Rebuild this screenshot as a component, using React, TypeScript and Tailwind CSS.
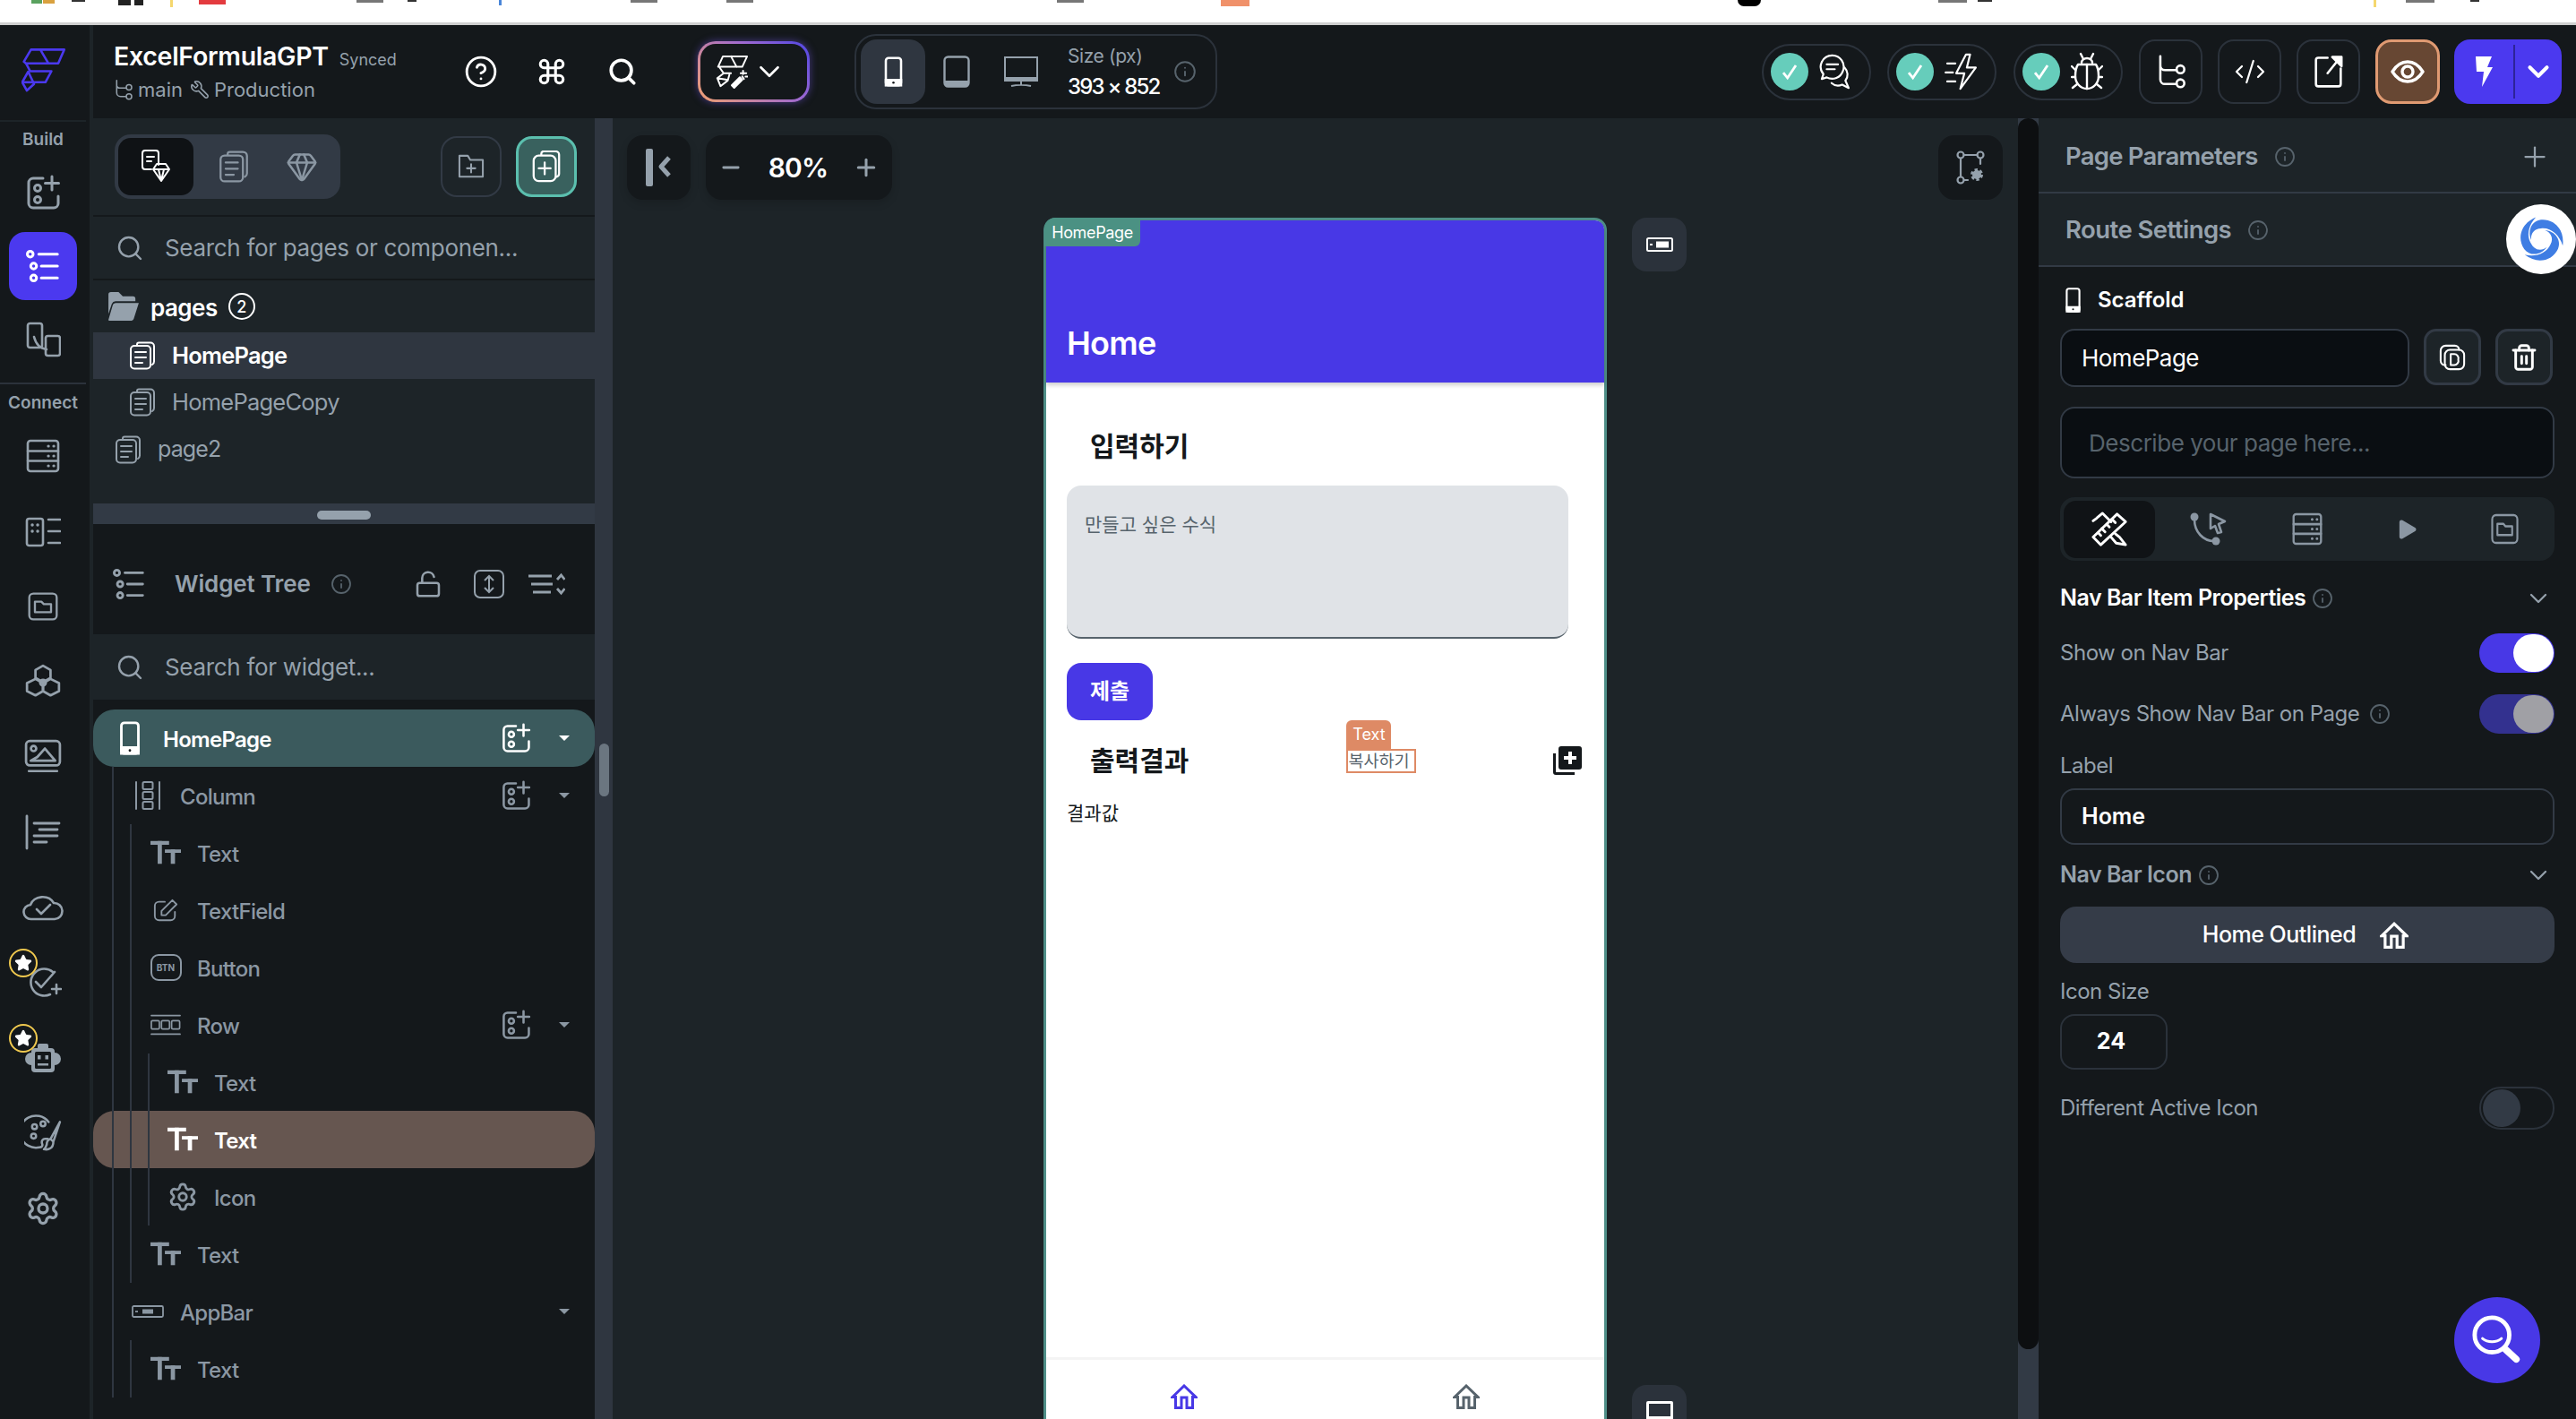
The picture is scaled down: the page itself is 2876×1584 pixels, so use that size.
import type { ReactNode } from "react";
import {
  ChevronDown,
  CircleHelp,
  CodeXml,
  Command,
  Gem,
  Info,
  LockOpen,
  Minus,
  Play,
  Plus,
  Search,
  Settings,
  Star,
  Trash2,
  Wrench,
} from "lucide-react";

type IconProps = { className?: string };

function Svg({ className, box = "0 0 40 40", sw = 2.6, children }: IconProps & { box?: string; sw?: number; children: ReactNode }) {
  return (
    <svg viewBox={box} fill="none" stroke="currentColor" strokeWidth={sw} strokeLinecap="round" strokeLinejoin="round" className={className}>
      {children}
    </svg>
  );
}

function Logo({ className }: IconProps) {
  return (
    <svg viewBox="0 0 50 50" fill="none" stroke="currentColor" strokeWidth="2.6" strokeLinejoin="round" className={className}>
      <path d="M2.600 14.800 10.600 1.400h37.100L41 16.700H5zM21 1.400l9 15.300" />
      <path d="M5 16.700 9.700 25.500h23.700L26.700 37.800H12" />
      <path d="M.8 37.800 7.500 26 14 39.700 6 47z" />
      <path d="M.8 37.800H14" />
    </svg>
  );
}

function WidgetAdd({ className }: IconProps) {
  return (
    <Svg className={className} sw={3}>
      <path d="M20 4H9a5 5 0 0 0-5 5v23a5 5 0 0 0 5 5h23a5 5 0 0 0 5-5V24" />
      <circle cx="14" cy="15" r="3.5" />
      <circle cx="14" cy="28" r="3.5" />
      <path d="M30 2v15M22.5 9.500h15" />
    </Svg>
  );
}

function ListDots({ className }: IconProps) {
  return (
    <Svg className={className} sw={3.2}>
      <circle cx="5" cy="6" r="3.400" />
      <circle cx="9" cy="20" r="3.400" />
      <circle cx="9" cy="34" r="3.400" />
      <path d="M15 6h22M18 20h19M18 34h19" />
    </Svg>
  );
}

function Connect({ className }: IconProps) {
  return (
    <Svg className={className}>
      <rect x="3" y="2" width="16" height="27" rx="2.500" />
      <rect x="23" y="16" width="16" height="22" rx="2.500" />
      <path d="M10 17c2 8 7 13 14 14" />
    </Svg>
  );
}

function Database({ className }: IconProps) {
  return (
    <svg viewBox="0 0 40 40" preserveAspectRatio="none" fill="none" stroke="currentColor" strokeWidth="2.600" strokeLinecap="round" className={className}>
      <rect x="3" y="3" width="34" height="34" rx="3" />
      <path d="M3 14.500h34M3 25.500h34" />
      <path d="M26 9h.1M32 9h.1M26 20h.1M32 20h.1M26 31h.1M32 31h.1" strokeWidth="3.200" />
    </svg>
  );
}

function GridList({ className }: IconProps) {
  return (
    <Svg className={className}>
      <rect x="2" y="6" width="18" height="30" rx="2.500" />
      <path d="M8 13h.1M14 13h.1M8 20h.1M14 20h.1" strokeWidth="3.400" />
      <path d="M26 7h13M26 20h13M26 33h13" />
    </Svg>
  );
}

function FolderBox({ className }: IconProps) {
  return (
    <svg viewBox="0 0 40 40" preserveAspectRatio="none" fill="none" stroke="currentColor" strokeWidth="2.600" strokeLinejoin="round" className={className}>
      <rect x="3" y="4" width="34" height="32" rx="5" />
      <path d="M10 14h8l3 3h9v10H10z" />
    </svg>
  );
}

function Hexes({ className }: IconProps) {
  return (
    <Svg className={className}>
      <path d="M20 3l8 4.500v8.500l-8 4.500-8-4.500V7.500z" />
      <path d="M12 17l8 4.500v8.500l-8 4.500-9-4.500V21.500z" />
      <path d="M28 17l9 4.500v8.500l-9 4.500-8-4.500V21.500z" />
      <circle cx="20" cy="21" r="3" />
    </Svg>
  );
}

function ImageLaptop({ className }: IconProps) {
  return (
    <Svg className={className}>
      <rect x="2" y="3" width="36" height="26" rx="4" />
      <circle cx="10" cy="11" r="2.800" />
      <path d="M7 24l7-4 8-9 11 13zM5 35h30" />
    </Svg>
  );
}

function AlignLines({ className }: IconProps) {
  return (
    <Svg className={className} sw={2.800}>
      <path d="M2 2v36" />
      <path d="M10 10h28M16 17h20M10 24h26M10 31h14" />
    </Svg>
  );
}

function CloudOk({ className }: IconProps) {
  return (
    <Svg className={className} box="0 0 46 32">
      <path d="M13 29H10a8 8 0 0 1-1-16A14 12 0 0 1 35 11a9 9 0 0 1 1 18z" />
      <path d="M16 18l5 5 10-10" />
    </Svg>
  );
}

function CheckAdd({ className }: IconProps) {
  return (
    <Svg className={className}>
      <path d="M31 8A15 15 0 1 0 28 33" />
      <path d="M12 19l6 6 15-17M30 27h10M35 22v10" />
    </Svg>
  );
}

function RobotHead({ className }: IconProps) {
  return (
    <svg viewBox="0 0 40 36" className={className} fill="currentColor">
      <path d="M14 4a2 2 0 0 1 2-2h8a2 2 0 0 1 2 2v3h3a4 4 0 0 1 4 4v1a7 7 0 0 1 0 14v4a4 4 0 0 1-4 4H11a4 4 0 0 1-4-4v-4a7 7 0 0 1 0-14v-1a4 4 0 0 1 4-4h3z" />
      <rect x="11" y="11" width="18" height="19" rx="1.500" fill="#14181b" />
      <rect x="14" y="15" width="3.500" height="4.500" />
      <rect x="22.500" y="15" width="3.500" height="4.500" />
      <rect x="14" y="24" width="12" height="2.500" />
    </svg>
  );
}

function PaletteBrush({ className }: IconProps) {
  return (
    <Svg className={className} sw={2.400}>
      <path d="M26 8A17 17 0 1 0 16 35c3 0 4-2 3-4-1-3 1-5 3-5h3" />
      <circle cx="10" cy="23" r="2.600" />
      <circle cx="11" cy="13" r="2.600" />
      <circle cx="20" cy="10" r="2.600" />
      <path d="M38 8 28 26l3 3 7-21zM28 26c-3 1-4 4-4 6-1 2-1 4-3 5 5 1 10-1 10-8" />
    </Svg>
  );
}

function BranchIcon({ className }: IconProps) {
  return (
    <Svg className={className} box="0 0 24 28" sw={1.800}>
      <path d="M3 2v16a5 5 0 0 0 5 5h7M3 9a4 4 0 0 0 4 3h8" />
      <circle cx="19" cy="11" r="3.500" />
      <circle cx="19" cy="23" r="3.500" />
    </Svg>
  );
}

function PageIcon({ className }: IconProps) {
  return (
    <Svg className={className} box="0 0 30 32" sw={2}>
      <path d="M9 4.500V3.500A2 2 0 0 1 11 1.500h13a4 4 0 0 1 4 4v17a4 4 0 0 1-2 3.500" />
      <rect x="2" y="5" width="22" height="25.500" rx="4" />
      <path d="M7 12h12M7 18h12M7 24h8" />
    </Svg>
  );
}

function PageGem({ className }: IconProps) {
  return (
    <Svg className={className} box="0 0 34 40" sw={2}>
      <path d="M20 18V5a3 3 0 0 0-3-3H5a3 3 0 0 0-3 3v15a3 3 0 0 0 3 3h7" />
      <path d="M7 9h8M7 14h5" />
      <path d="M18 17h10l4 6-9 13-9-13zM14 23h18M20 23l3 13 3-13" />
    </Svg>
  );
}

function FolderAdd({ className }: IconProps) {
  return (
    <Svg className={className} box="0 0 32 30" sw={2.200}>
      <path d="M2 2h10l3 5h15v20H2z" />
      <path d="M16 12v10M11 17h10" />
    </Svg>
  );
}

function PageAdd({ className }: IconProps) {
  return (
    <Svg className={className} box="0 0 34 38" sw={2.400}>
      <path d="M11 5V4a3 3 0 0 1 3-3h14a4 4 0 0 1 4 4v22a4 4 0 0 1-3 4" />
      <rect x="2" y="6" width="26" height="30" rx="6" />
      <path d="M15 14v14M8 21h14" />
    </Svg>
  );
}

function FolderOpenSolid({ className }: IconProps) {
  return (
    <svg viewBox="0 0 36 34" className={className} fill="currentColor">
      <path d="M0 3a3 3 0 0 1 3-3h9l5 5h12a3 3 0 0 1 3 3v3H9a5 5 0 0 0-5 3L0 26z" />
      <path d="M9 13h27l-6 19a3 3 0 0 1-3 2H1a1 1 0 0 1-1-1l5-17a4 4 0 0 1 4-3z" />
    </svg>
  );
}

function PhoneSolid({ className }: IconProps) {
  return (
    <svg viewBox="0 0 24 40" className={className} fill="none" stroke="currentColor" strokeWidth="3">
      <rect x="2" y="2" width="20" height="36" rx="3.500" />
      <rect x="2" y="31" width="20" height="7" fill="currentColor" />
      <circle cx="12" cy="34.500" r="1.500" fill="#14181b" stroke="none" />
    </svg>
  );
}

function TabletChin({ className }: IconProps) {
  return (
    <svg viewBox="0 0 30 36" className={className} fill="none" stroke="currentColor" strokeWidth="2.400">
      <rect x="1.500" y="1.500" width="27" height="33" rx="4" />
      <path d="M1.500 28h27v3a4 4 0 0 1-4 4h-19a4 4 0 0 1-4-4z" fill="currentColor" stroke="none" />
    </svg>
  );
}

function DesktopChin({ className }: IconProps) {
  return (
    <svg viewBox="0 0 38 34" className={className} fill="none" stroke="currentColor" strokeWidth="2">
      <rect x="1" y="1" width="36" height="26" />
      <rect x="1" y="23" width="36" height="5" fill="currentColor" stroke="none" />
      <path d="M19 28v4M8 33c6-1.500 16-1.500 22 0" />
    </svg>
  );
}

function TextIcon({ className }: IconProps) {
  return (
    <svg viewBox="0 0 36 28" className={className} fill="currentColor">
      <rect x="0" y="0" width="22" height="4.500" />
      <rect x="8.500" y="0" width="5" height="27" />
      <rect x="17" y="10" width="19" height="4" />
      <rect x="24" y="10" width="5" height="17" />
    </svg>
  );
}

function FieldIcon({ className }: IconProps) {
  return (
    <Svg className={className} box="0 0 30 28" sw={2}>
      <path d="M14 4H7a5 5 0 0 0-5 5v12a5 5 0 0 0 5 5h14a5 5 0 0 0 5-5v-5" />
      <path d="M10 15v5h5L28 7l-5-5z" />
    </Svg>
  );
}

function RowIcon({ className }: IconProps) {
  return (
    <Svg className={className} box="0 0 36 26" sw={1.800}>
      <path d="M1 2h34M1 24h34" />
      <rect x="1" y="8" width="9.500" height="10" rx="1.500" />
      <rect x="13" y="8" width="9.500" height="10" rx="1.500" />
      <rect x="25" y="8" width="9.500" height="10" rx="1.500" />
    </Svg>
  );
}

function ColumnIcon({ className }: IconProps) {
  return (
    <Svg className={className} box="0 0 30 34" sw={2}>
      <path d="M2 2v30M28 2v30" />
      <rect x="9.500" y="2" width="11" height="8" rx="1.500" />
      <rect x="9.500" y="13" width="11" height="8" rx="1.500" />
      <rect x="9.500" y="24" width="11" height="8" rx="1.500" />
    </Svg>
  );
}

function AppBarIcon({ className }: IconProps) {
  return (
    <svg viewBox="0 0 36 14" className={className} fill="none" stroke="currentColor" strokeWidth="1.800">
      <rect x="1" y="1" width="34" height="12" rx="1.500" />
      <rect x="12" y="4.500" width="12" height="5" fill="currentColor" stroke="none" />
      <path d="M4 7h3" />
    </svg>
  );
}

function GitIcon({ className }: IconProps) {
  return (
    <Svg className={className} box="0 0 36 44" sw={3}>
      <path d="M4 2v30a6 6 0 0 0 6 6h15M4 14a6 6 0 0 0 6 6h15" />
      <circle cx="30" cy="19" r="5" />
      <circle cx="30" cy="37" r="5" />
    </Svg>
  );
}

function Launch({ className }: IconProps) {
  return (
    <Svg className={className} box="0 0 38 44" sw={3}>
      <path d="M18 4H6a3 3 0 0 0-3 3v31a3 3 0 0 0 3 3h26a3 3 0 0 0 3-3V18" />
      <path d="M18 24 34 4" />
      <path d="M24 3h12v12z" fill="currentColor" />
    </Svg>
  );
}

function EyeRing({ className }: IconProps) {
  return (
    <Svg className={className} box="0 0 38 26" sw={3.400}>
      <path d="M2 13C7 5 12 2 19 2s12 3 17 11c-5 8-10 11-17 11S7 21 2 13z" />
      <circle cx="19" cy="13" r="6" />
    </Svg>
  );
}

function ChatPair({ className }: IconProps) {
  return (
    <Svg className={className} box="0 0 38 44" sw={2.400}>
      <path d="M16 2a14 14 0 0 1 13 19 14 14 0 0 1-20 8l-6 2 2-6A14 14 0 0 1 16 2z" />
      <path d="M9 13h14M9 19h10" />
      <path d="M31 17a12 12 0 0 1 1 16l4 9-8-4a12 12 0 0 1-13-2" />
    </Svg>
  );
}

function SpeedBolt({ className }: IconProps) {
  return (
    <Svg className={className} box="0 0 40 46" sw={2.400}>
      <path d="M26 2 14 25h10l-5 19 19-26H27l4-16z" />
      <path d="M3 13h10M1 24h9M3 35h10" />
    </Svg>
  );
}

function Beetle({ className }: IconProps) {
  return (
    <Svg className={className} box="0 0 36 44" sw={2.400}>
      <path d="M12 12c0-3 3-5 6-5s6 2 6 5" />
      <path d="M8 14h20c2 3 3 8 3 13 0 8-6 14-13 14S5 35 5 27c0-5 1-10 3-13z" />
      <path d="M18 14v27M11 2l3 6M25 2l-3 6M5 20 1 16M31 20l4-4M5 28H1M31 28h4M7 36l-5 4M29 36l5 4" />
    </Svg>
  );
}

function BoltSolid({ className }: IconProps) {
  return (
    <svg viewBox="0 0 20 34" className={className} fill="currentColor">
      <path d="M1 0h18l-5 12h6L8 34l2-17H2z" />
    </svg>
  );
}

function AiLogo({ className }: IconProps) {
  return (
    <Svg className={className} box="0 0 40 42" sw={2.200}>
      <path d="M3 15 9 2h30l-6 13H3zM19 2l7 13M5 16l5 7h9M10 23l-8 6 4 10 9-7 2-7M2 29l12 2" />
      <path d="M20 38l10-10 3 3-10 10z" fill="currentColor" />
      <path d="M34 20v4M31 23h7M37 27h3M33 27l2 3" />
    </Svg>
  );
}

function FlowGear({ className }: IconProps) {
  return (
    <Svg className={className} box="0 0 32 38" sw={2.200}>
      <circle cx="5" cy="5" r="3.500" />
      <circle cx="27" cy="5" r="3.500" />
      <circle cx="5" cy="33" r="3.500" />
      <path d="M8.500 5h15M5 9v20M27 9v6M9 33h4" />
      <circle cx="23" cy="27" r="5" fill="currentColor" strokeWidth="4" strokeDasharray="3 2.200" strokeLinecap="butt" />
    </Svg>
  );
}

function CollapseRail({ className }: IconProps) {
  return (
    <svg viewBox="0 0 30 42" className={className} fill="none">
      <rect x="0" y="0" width="8" height="42" rx="2" fill="currentColor" />
      <path d="M26 10 17 20l9 10" stroke="currentColor" strokeWidth="5" strokeLinejoin="round" />
    </svg>
  );
}

function MiniBar({ className }: IconProps) {
  return (
    <svg viewBox="0 0 30 16" className={className} fill="none" stroke="currentColor" strokeWidth="2">
      <rect x="1" y="1" width="28" height="14" rx="1.500" />
      <rect x="11" y="4.500" width="14" height="7" fill="currentColor" stroke="none" />
      <path d="M4 8h3" />
    </svg>
  );
}

function DupIcon({ className }: IconProps) {
  return (
    <Svg className={className} box="0 0 32 32" sw={2.200}>
      <path d="M8 25A5 5 0 0 1 2 20V8a6 6 0 0 1 6-6h11a5 5 0 0 1 5 5" />
      <rect x="7" y="7" width="23" height="23" rx="6" />
      <path d="M14 12v13h4a5 5 0 0 0 5-6.500 5 5 0 0 0-5-6.500z" />
    </Svg>
  );
}

function RulerPen({ className }: IconProps) {
  return (
    <Svg className={className} box="0 0 42 40" sw={3}>
      <path d="M30 2l10 9-29 27-9-9z" />
      <path d="M24 8l4 4M18 14l3 3M12 19l4 4M8 24l3 3" />
      <path d="M7 6l6-5 10 10M2 10l4-3M28 25l5 4 7 9-11-2-6-7" />
    </Svg>
  );
}

function ActionFlow({ className }: IconProps) {
  return (
    <svg viewBox="0 0 42 38" className={className} fill="none" stroke="currentColor" strokeWidth="2.600">
      <circle cx="6" cy="6" r="4.500" fill="currentColor" stroke="none" />
      <circle cx="30" cy="33" r="4.500" fill="currentColor" stroke="none" />
      <path d="M6 9c0 14 10 24 22 24" />
      <path d="M24 3l16 8-7 3 3 9-4 1-3-8-5 3z" strokeLinejoin="round" />
    </svg>
  );
}

function HouseOutline({ className }: IconProps) {
  return (
    <svg viewBox="0 0 30 28" className={className} fill="none" stroke="currentColor" strokeWidth="3" strokeLinejoin="miter">
      <path d="M2 14.500 15 2l13 12.500h-3.500V26.500H18V15h-6v11.500H5.500V14.500z" />
    </svg>
  );
}

function AddToPhotos({ className }: IconProps) {
  return (
    <svg viewBox="0 0 32 32" className={className} fill="currentColor">
      <path d="M3 8H0v21a3 3 0 0 0 3 3h21v-3H3z" />
      <path d="M29 0H9a3 3 0 0 0-3 3v20a3 3 0 0 0 3 3h20a3 3 0 0 0 3-3V3a3 3 0 0 0-3-3zm-3 15h-5v5h-4v-5h-5v-4h5V6h4v5h5z" />
    </svg>
  );
}

function Magnifier({ className }: IconProps) {
  return (
    <svg viewBox="0 0 60 60" className={className} fill="none" stroke="currentColor" strokeWidth="5" strokeLinecap="round">
      <circle cx="24" cy="24" r="20" />
      <path d="M13 28c6 5 16 5 22 0" strokeWidth="3" />
      <path d="M40 41 52 52" strokeWidth="8" />
    </svg>
  );
}

function Swirl({ className }: IconProps) {
  const arm = "M24 6C36 5 46 15 44 30 41 20 33 13 24 14 17 14 14 20 15 25 11 17 15 7 24 6z";
  return (
    <svg viewBox="0 0 48 48" className={className} fill="#3f7de3">
      {[0, 120, 240].map((deg) => (
        <path key={deg} d={arm} transform={`rotate(${deg} 24 24)`} />
      ))}
    </svg>
  );
}

const topBits = [
  "ml-[35px] w-[12px] h-[4px] bg-[#5aa25f]",
  "ml-[1px] w-[13px] h-[4px] bg-[#d9a13f]",
  "ml-[19px] w-[15px] h-[2px] bg-[#333]",
  "ml-[37px] w-[14px] h-[6px] bg-[#222]",
  "ml-[4px] w-[10px] h-[6px] bg-[#222]",
  "ml-[30px] w-[3px] h-[8px] bg-[#f5d76e]",
  "ml-[29px] w-[30px] h-[5px] bg-[#e33b3f]",
  "ml-[146px] w-[30px] h-[3px] bg-[#777]",
  "ml-[27px] w-[10px] h-[2px] bg-[#333]",
  "ml-[92px] w-[3px] h-[6px] bg-[#4a86d8]",
  "ml-[144px] w-[30px] h-[3px] bg-[#777]",
  "ml-[77px] w-[30px] h-[3px] bg-[#777]",
  "ml-[339px] w-[30px] h-[3px] bg-[#777]",
  "ml-[153px] w-[32px] h-[7px] bg-[#f0916a]",
  "ml-[545px] w-[26px] h-[7px] rounded-b-full bg-black",
  "ml-[198px] w-[32px] h-[3px] bg-[#777]",
  "ml-[12px] w-[16px] h-[2px] bg-[#333]",
  "ml-[426px] w-[3px] h-[8px] bg-[#f5d76e]",
  "ml-[33px] w-[32px] h-[3px] bg-[#777]",
  "ml-[40px] w-[10px] h-[2px] bg-[#333]",
];

const railTop = [
  { icon: WidgetAdd },
  { icon: ListDots, active: true },
  { icon: Connect },
];

const railBottom = [
  { icon: Database, size: "w-[40px] h-[40px]" },
  { icon: GridList, size: "w-[40px] h-[40px]" },
  { icon: FolderBox, size: "w-[36px] h-[36px]" },
  { icon: Hexes, size: "w-[42px] h-[42px]" },
  { icon: ImageLaptop, size: "w-[42px] h-[42px]" },
  { icon: AlignLines, size: "w-[40px] h-[40px]" },
  { icon: CloudOk, size: "w-[46px] h-[32px]" },
  { icon: CheckAdd, size: "w-[42px] h-[40px]", star: true },
  { icon: RobotHead, size: "w-[40px] h-[36px]", star: true },
  { icon: PaletteBrush, size: "w-[42px] h-[42px]" },
  { icon: Settings, size: "w-[40px] h-[40px]" },
];

const treeRows = [
  { label: "HomePage", icon: PhoneSolid, size: "w-[24px] h-[38px]", level: "pl-[21px]", gap: "ml-[17px]", tone: "home", add: true, caret: true },
  { label: "Column", icon: ColumnIcon, size: "w-[30px] h-[34px]", level: "pl-[41px]", gap: "ml-[16px]", add: true, caret: true },
  { label: "Text", icon: TextIcon, size: "w-[34px] h-[28px]", level: "pl-[61px]", gap: "ml-[15px]" },
  { label: "TextField", icon: FieldIcon, size: "w-[28px] h-[28px]", level: "pl-[61px]", gap: "ml-[15px]" },
  { label: "Button", icon: null, size: "", level: "pl-[61px]", gap: "ml-[15px]" },
  { label: "Row", icon: RowIcon, size: "w-[34px] h-[26px]", level: "pl-[61px]", gap: "ml-[15px]", add: true, caret: true },
  { label: "Text", icon: TextIcon, size: "w-[34px] h-[28px]", level: "pl-[80px]", gap: "ml-[15px]" },
  { label: "Text", icon: TextIcon, size: "w-[34px] h-[28px]", level: "pl-[80px]", gap: "ml-[15px]", tone: "picked" },
  { label: "Icon", icon: Settings, size: "w-[34px] h-[34px]", level: "pl-[80px]", gap: "ml-[15px]" },
  { label: "Text", icon: TextIcon, size: "w-[34px] h-[28px]", level: "pl-[61px]", gap: "ml-[15px]" },
  { label: "AppBar", icon: AppBarIcon, size: "w-[36px] h-[14px]", level: "pl-[41px]", gap: "ml-[16px]", caret: true },
  { label: "Text", icon: TextIcon, size: "w-[34px] h-[28px]", level: "pl-[61px]", gap: "ml-[15px]" },
];

function Rail() {
  return (
    <aside className="flex w-[104px] shrink-0 flex-col border-r-[4px] border-[#1d2428] bg-[#14181b] pr-[4px]">
      <div className="mt-[2px] h-[2px] bg-[#1d2428]" />
      <p className="mt-[8px] h-[24px] text-center text-[19px] leading-[24px] font-semibold text-[#95a1ac]">Build</p>
      <div className="mt-[9px] flex flex-col items-center gap-[6px]">
        {railTop.map(({ icon: Icon, active }, i) => (
          <div
            key={i}
            className={active ? "flex h-[76px] w-[76px] items-center justify-center rounded-[18px] bg-[#4b39ef] text-white" : "flex h-[76px] w-[76px] items-center justify-center text-[#95a1ac]"}
          >
            <Icon className={active ? "h-[38px] w-[38px]" : "h-[40px] w-[40px]"} />
          </div>
        ))}
      </div>
      <div className="mt-[10px] h-[2px] w-[96px] bg-[#2b323b]" />
      <p className="mt-[9px] h-[24px] text-center text-[19px] leading-[24px] font-semibold text-[#95a1ac]">Connect</p>
      <div className="mt-[9px] flex flex-col items-center gap-[8px]">
        {railBottom.map(({ icon: Icon, size, star }, i) => (
          <div key={i} className="relative flex h-[76px] w-[76px] items-center justify-center text-[#95a1ac]">
            <Icon className={size} />
            {star ? (
              <span className="absolute top-0 left-0 flex h-[32px] w-[32px] items-center justify-center rounded-full border-[2px] border-[#f0c94f] bg-[#14181b]">
                <Star className="h-[20px] w-[20px] fill-white text-white" />
              </span>
            ) : null}
          </div>
        ))}
      </div>
    </aside>
  );
}

function Header() {
  return (
    <header className="flex h-[104px] shrink-0 items-center bg-[#14181b]">
      <div className="flex h-full w-[100px] shrink-0 items-center justify-center pr-[2px] pb-[2px]">
        <Logo className="h-[50px] w-[50px] text-[#4b39ef]" />
      </div>
      <div className="h-full w-[4px] shrink-0 bg-[#1d2428]" />
      <div className="ml-[23px] w-[372px] shrink-0">
        <div className="flex items-baseline">
          <span className="text-[28.500px] leading-[34px] font-semibold tracking-[-0.01em] text-white">ExcelFormulaGPT</span>
          <span className="ml-[12px] text-[18px] text-[#95a1ac]">Synced</span>
        </div>
        <div className="mt-[5px] flex items-center text-[22px] leading-[30px] text-[#95a1ac]">
          <BranchIcon className="h-[24px] w-[22px]" />
          <span className="ml-[5px]">main</span>
          <Wrench className="ml-[8px] h-[22px] w-[22px] -scale-x-100" strokeWidth={1.700} />
          <span className="ml-[5px]">Production</span>
        </div>
      </div>
      <CircleHelp className="ml-[19px] h-[38px] w-[38px] text-white" strokeWidth={1.800} />
      <Command className="ml-[43px] h-[34px] w-[34px] text-white" strokeWidth={2.200} />
      <Search className="ml-[45px] h-[34px] w-[34px] text-white" strokeWidth={2.600} />
      <div className="ml-[67px] rounded-[20px] bg-[linear-gradient(45deg,#f0a070,#a06ad0_60%,#4f46e5)] p-[3px] shadow-[0_0_8px_rgba(120,90,240,0.5)]">
        <div className="flex h-[62px] w-[119px] items-center rounded-[17px] bg-[#14181b] pl-[17px] text-white">
          <AiLogo className="h-[38px] w-[36px]" />
          <ChevronDown className="ml-[5px] h-[38px] w-[38px]" strokeWidth={1.700} />
        </div>
      </div>
      <div className="ml-[50px] flex h-[84px] w-[405px] items-center rounded-[24px] border-[2px] border-[#2b323b] pl-[5px]">
        <div className="flex h-[72px] w-[72px] items-center justify-center rounded-[18px] bg-[#2f3640] text-white">
          <PhoneSolid className="h-[34px] w-[21px]" />
        </div>
        <TabletChin className="ml-[20px] h-[36px] w-[30px] text-[#95a1ac]" />
        <DesktopChin className="ml-[38px] h-[34px] w-[38px] text-[#95a1ac]" />
        <div className="ml-[33px] w-[112px]">
          <p className="text-[21px] leading-[30px] tracking-[-0.02em] text-[#95a1ac]">Size (px)</p>
          <p className="mt-[4px] text-[24px] leading-[30px] font-medium tracking-[-0.075em] whitespace-nowrap text-white">393 × 852</p>
        </div>
        <Info className="ml-[6px] h-[26px] w-[26px] text-[#57636c]" strokeWidth={1.800} />
      </div>
      <div className="ml-[608px] flex items-center">
        <StatusPill icon={<ChatPair className="h-[40px] w-[35px]" />} />
        <StatusPill icon={<SpeedBolt className="h-[42px] w-[37px]" />} className="ml-[18px]" />
        <StatusPill icon={<Beetle className="h-[44px] w-[36px]" />} className="ml-[19px]" />
      </div>
      <HeadBtn className="ml-[18px]"><GitIcon className="h-[38px] w-[32px]" /></HeadBtn>
      <HeadBtn className="ml-[17px]"><CodeXml className="h-[36px] w-[36px]" strokeWidth={1.500} /></HeadBtn>
      <HeadBtn className="ml-[17px]"><Launch className="h-[38px] w-[33px]" /></HeadBtn>
      <div className="ml-[17px] flex h-[72px] w-[72px] items-center justify-center rounded-[18px] border-[3px] border-[#e09a72] bg-[#674733] text-white">
        <EyeRing className="h-[26px] w-[38px]" />
      </div>
      <div className="ml-[16px] flex h-[72px] w-[120px] items-center rounded-[18px] bg-[#4b39ef] text-white">
        <div className="flex h-[60px] w-[68px] items-center justify-center border-r-[2px] border-[#2d2399]">
          <BoltSolid className="h-[34px] w-[20px]" />
        </div>
        <ChevronDown className="ml-[7px] h-[38px] w-[38px]" strokeWidth={2.600} />
      </div>
    </header>
  );
}

function StatusPill({ icon, className = "" }: { icon: ReactNode; className?: string }) {
  return (
    <div className={`flex h-[63px] w-[122px] items-center rounded-full border-[2px] border-[#2b323b] pl-[8px] text-white ${className}`}>
      <span className="flex h-[42px] w-[42px] items-center justify-center rounded-full bg-[#66cdbb]">
        <svg viewBox="0 0 24 24" className="h-[28px] w-[28px]" fill="none" stroke="white" strokeWidth="2.400">
          <path d="m6 13 4 5 8-12" />
        </svg>
      </span>
      <span className="ml-[12px] flex items-center">{icon}</span>
    </div>
  );
}

function HeadBtn({ children, className = "" }: { children: ReactNode; className?: string }) {
  return <div className={`flex h-[72px] w-[71px] items-center justify-center rounded-[18px] border-[2px] border-[#2b323b] text-white ${className}`}>{children}</div>;
}

function PagesPanel() {
  return (
    <div className="flex h-[430px] shrink-0 flex-col bg-[#1d2428]">
      <div className="flex h-[108px] shrink-0 items-center pl-[24px]">
        <div className="flex h-[72px] w-[252px] items-center rounded-[18px] bg-[#323a45] p-[4px] text-[#8b97a3]">
          <div className="flex h-[64px] w-[84px] items-center justify-center rounded-[14px] bg-[#0f1215] text-white">
            <PageGem className="h-[40px] w-[34px]" />
          </div>
          <PageIcon className="ml-[28px] h-[38px] w-[34px]" />
          <Gem className="ml-[41px] h-[40px] w-[36px]" strokeWidth={1.700} />
        </div>
        <div className="ml-[112px] flex h-[68px] w-[68px] items-center justify-center rounded-[18px] border-[2px] border-[#323a45] text-[#95a1ac]">
          <FolderAdd className="h-[28px] w-[30px]" />
        </div>
        <div className="ml-[16px] flex h-[68px] w-[68px] items-center justify-center rounded-[18px] border-[3px] border-[#5bbfae] bg-[#39615e] text-white">
          <PageAdd className="h-[36px] w-[34px]" />
        </div>
      </div>
      <div className="flex h-[73px] shrink-0 items-center border-y-[2px] border-[#14181b] pl-[25px] text-[#95a1ac]">
        <Search className="h-[32px] w-[32px]" strokeWidth={1.800} />
        <span className="ml-[23px] text-[26px] tracking-[-0.012em] whitespace-nowrap">Search for pages or componen...</span>
      </div>
      <div className="flex h-[58px] shrink-0 items-center pl-[16px]">
        <FolderOpenSolid className="h-[32px] w-[36px] text-[#95a1ac]" />
        <span className="ml-[12px] pt-[3px] text-[26px] font-semibold tracking-[-0.02em] text-white">pages</span>
        <span className="ml-[12px] flex h-[30px] w-[30px] items-center justify-center rounded-full border-[2px] border-white text-[18px] font-medium text-white">2</span>
      </div>
      <div className="flex h-[52px] shrink-0 items-center bg-[#2f3640] pl-[40px] text-white">
        <PageIcon className="h-[32px] w-[30px]" />
        <span className="ml-[18px] text-[25.500px] font-semibold tracking-[-0.03em]">HomePage</span>
      </div>
      <div className="flex h-[52px] shrink-0 items-center pl-[40px] text-[#95a1ac]">
        <PageIcon className="h-[32px] w-[30px]" />
        <span className="ml-[18px] text-[25.500px] tracking-[-0.03em]">HomePageCopy</span>
      </div>
      <div className="flex h-[52px] shrink-0 items-center pt-[2px] pl-[24px] text-[#95a1ac]">
        <PageIcon className="h-[32px] w-[30px]" />
        <span className="ml-[18px] text-[25px] tracking-[-0.035em]">page2</span>
      </div>
    </div>
  );
}

function WidgetTree() {
  return (
    <div className="flex flex-1 flex-col overflow-hidden bg-[#14181b]">
      <div className="flex h-[123px] shrink-0 items-center pt-[10px] pl-[22px] text-[#95a1ac]">
        <ListDots className="h-[36px] w-[36px]" />
        <span className="ml-[33px] text-[26px] font-semibold tracking-[-0.005em]">Widget Tree</span>
        <Info className="ml-[22px] h-[24px] w-[24px] text-[#57636c]" strokeWidth={1.800} />
        <LockOpen className="ml-[69px] h-[32px] w-[32px]" strokeWidth={1.900} />
        <span className="ml-[35px] flex h-[32px] w-[34px] items-center justify-center rounded-[7px] border-[2px] border-[#95a1ac] text-[18px] leading-none">
          <svg viewBox="0 0 16 20" className="h-[22px] w-[16px]" fill="none" stroke="currentColor" strokeWidth="2">
            <path d="M8 1v18M3 6l5-5 5 5M3 14l5 5 5-5" />
          </svg>
        </span>
        <svg viewBox="0 0 42 28" className="ml-[26px] h-[28px] w-[42px]" fill="none" stroke="currentColor" strokeWidth="2.800">
          <path d="M1 5h26M4 14h24M6 23h20M33 9l4.500-5 4 5M33 19l4.500 5 4-5" />
        </svg>
      </div>
      <div className="flex h-[73px] shrink-0 items-center bg-[#1d2428] pl-[25px] text-[#95a1ac]">
        <Search className="h-[32px] w-[32px]" strokeWidth={1.800} />
        <span className="ml-[23px] text-[26px] tracking-[-0.012em]">Search for widget...</span>
      </div>
      <div className="relative mt-[11px]">
        {treeRows.map((row, i) => {
          const Icon = row.icon;
          const rowTone =
            row.tone === "home"
              ? "bg-[#3b5a5d] text-white font-semibold rounded-[24px]"
              : row.tone === "picked"
                ? "bg-[#665650] text-white font-semibold rounded-[24px]"
                : "text-[#8b97a3] font-medium";
          return (
            <div key={i} className={`flex h-[64px] items-center ${row.level} ${rowTone}`}>
              <span className="flex w-[40px] justify-center">
                {Icon ? (
                  <Icon className={row.size} />
                ) : (
                  <span className="flex h-[30px] w-[35px] items-center justify-center rounded-[9px] border-[2px] border-current text-[10px] font-bold">BTN</span>
                )}
              </span>
              <span className={`${row.gap} pt-[3px] text-[24px] tracking-[-0.03em]`}>{row.label}</span>
              {row.add ? <WidgetAdd className="absolute left-[455px] h-[34px] w-[34px]" /> : null}
              {row.caret ? <span className="absolute left-[520px] h-0 w-0 border-x-[6px] border-t-[6px] border-x-transparent border-t-current" /> : null}
            </div>
          );
        })}
        <span className="absolute top-[64px] bottom-[0px] left-[21px] w-[2px] bg-[#2f3640]" />
        <span className="absolute top-[128px] left-[41px] h-[512px] w-[2px] bg-[#2f3640]" />
        <span className="absolute top-[384px] left-[61px] h-[192px] w-[2px] bg-[#2f3640]" />
        <span className="absolute top-[704px] left-[41px] h-[64px] w-[2px] bg-[#2f3640]" />
      </div>
    </div>
  );
}

function Canvas() {
  return (
    <main className="flex min-w-0 flex-1 bg-[#1d2428]">
      <div className="mt-[19px] ml-[16px] flex h-[72px] shrink-0 gap-[17px] text-[#95a1ac]">
        <div className="flex h-[72px] w-[71px] items-center justify-center rounded-[18px] bg-[#14181b] shadow-[0_4px_10px_rgba(0,0,0,0.15)]">
          <CollapseRail className="h-[42px] w-[30px]" />
        </div>
        <div className="flex h-[72px] w-[208px] items-center justify-between rounded-[18px] bg-[#14181b] px-[14px] shadow-[0_4px_10px_rgba(0,0,0,0.15)]">
          <Minus className="h-[30px] w-[28px]" strokeWidth={2.400} />
          <span className="text-[30px] font-semibold tracking-[-0.03em] text-white">80%</span>
          <Plus className="h-[30px] w-[30px]" strokeWidth={2.400} />
        </div>
      </div>
      <Phone />
      <div className="ml-[28px] shrink-0 pt-[111px]">
        <div className="flex h-[60px] w-[61px] items-center justify-center rounded-[16px] bg-[#2b323b] text-white">
          <MiniBar className="h-[16px] w-[30px]" />
        </div>
        <div className="mt-[1243px] flex h-[60px] w-[61px] justify-center rounded-[16px] bg-[#2b323b] pt-[18px]">
          <span className="flex h-[40px] w-[30px] items-end rounded-[2px] border-[3px] border-white">
            <span className="h-[20px] w-full bg-white" />
          </span>
        </div>
      </div>
      <div className="mt-[19px] ml-[281px] flex h-[72px] w-[72px] shrink-0 items-center justify-center rounded-[18px] bg-[#14181b] text-[#95a1ac]">
        <FlowGear className="h-[38px] w-[32px]" />
      </div>
    </main>
  );
}

function Phone() {
  return (
    <div className="relative mt-[111px] ml-[169px] flex h-[1341px] w-[629px] shrink-0 flex-col rounded-t-[14px] border-x-[3px] border-t-[3px] border-[#4f8f88] bg-white">
      <span className="absolute top-[-3px] left-[-2px] flex h-[32px] w-[107px] items-center justify-center rounded-tl-[12px] rounded-br-[6px] bg-[#4b9183] text-[18px] tracking-[-0.02em] text-white">HomePage</span>
      <div className="flex h-[181px] shrink-0 items-end rounded-t-[10px] bg-[#4838e6] pb-[22px] pl-[23px] shadow-[0_3px_5px_rgba(0,0,0,0.2)]">
        <span className="text-[36px] leading-[44px] font-semibold tracking-[-0.02em] text-white">Home</span>
      </div>
      <div className="flex flex-1 flex-col pl-[23px]">
        <p className="mt-[49px] ml-[26px] text-[30px] leading-[44px] font-bold text-[#14181b]">입력하기</p>
        <div className="mt-[22px] h-[171px] w-[560px] rounded-[16px] border-b-[2px] border-[#57636c] bg-[#e0e3e7] pt-[30px] pl-[20px] text-[21px] leading-[28px] text-[#57636c]">만들고 싶은 수식</div>
        <div className="mt-[27px] flex h-[64px] w-[96px] items-center justify-center rounded-[16px] bg-[#4838e6] text-[24px] font-semibold text-white">제출</div>
        <div className="mt-[24px] flex h-[42px] w-[575px] items-center">
          <p className="ml-[26px] text-[30px] leading-[44px] font-bold text-[#14181b]">출력결과</p>
          <div className="relative ml-[176px] h-[27px] w-[78px] border-[2px] border-[#de8a65] text-[18.500px] leading-[22px] whitespace-nowrap text-[#57636c]">
            <span className="absolute top-[-34px] left-[-2px] flex h-[32px] w-[50px] items-center justify-center rounded-t-[6px] bg-[#de8a65] text-[18px] text-white">Text</span>
            복사하기
          </div>
          <AddToPhotos className="ml-auto h-[32px] w-[32px] text-[#14181b]" />
        </div>
        <p className="mt-[23px] text-[21px] leading-[30px] text-[#14181b]">결과값</p>
      </div>
      <div className="flex h-[69px] shrink-0 items-start border-t-[3px] border-[#f4f4f4] bg-white pt-[27px]">
        <HouseOutline className="ml-[139px] h-[28px] w-[30px] text-[#4838e6]" />
        <HouseOutline className="ml-[285px] h-[28px] w-[30px] text-[#57636c]" />
      </div>
    </div>
  );
}

function Toggle({ tone }: { tone: "on" | "dim" | "off" }) {
  if (tone === "off") {
    return (
      <div className="flex h-[48px] w-[84px] items-center rounded-full border-[2px] border-[#2b323b] pl-[2px]">
        <span className="h-[42px] w-[42px] rounded-full bg-[#323a45]" />
      </div>
    );
  }
  return (
    <div className={tone === "on" ? "flex h-[44px] w-[84px] items-center justify-end rounded-full bg-[#4838e6] pr-[1px]" : "flex h-[44px] w-[84px] items-center justify-end rounded-full bg-[#33318f] pr-[1px]"}>
      <span className={tone === "on" ? "h-[42px] w-[45px] rounded-full bg-white" : "h-[42px] w-[45px] rounded-full bg-[#a0a0a5]"} />
    </div>
  );
}

function Properties() {
  return (
    <aside className="relative w-[600px] shrink-0 bg-[#14181b]">
      <div className="bg-[#1d2428]">
        <div className="flex h-[84px] items-center border-b-[2px] border-[#323a45] pt-[4px] pr-[28px] pl-[30px] text-[#95a1ac]">
          <span className="text-[27.500px] font-semibold tracking-[-0.028em]">Page Parameters</span>
          <Info className="ml-[18px] h-[24px] w-[24px] text-[#57636c]" strokeWidth={1.800} />
          <Plus className="ml-auto h-[36px] w-[36px]" strokeWidth={1.500} />
        </div>
        <div className="flex h-[82px] items-center border-b-[2px] border-[#323a45] pt-[2px] pl-[30px] text-[#95a1ac]">
          <span className="text-[27.500px] font-semibold tracking-[-0.02em]">Route Settings</span>
          <Info className="ml-[18px] h-[24px] w-[24px] text-[#57636c]" strokeWidth={1.800} />
        </div>
      </div>
      <span className="absolute top-[96px] right-0 flex h-[78px] w-[78px] items-center justify-center rounded-full bg-white">
        <Swirl className="h-[58px] w-[58px]" />
      </span>
      <div className="pr-[24px] pl-[24px]">
        <div className="mt-[20px] flex h-[34px] items-center text-white">
          <PhoneSolid className="ml-[6px] h-[30px] w-[17px]" />
          <span className="ml-[19px] text-[24px] font-semibold">Scaffold</span>
        </div>
        <div className="mt-[15px] flex h-[65px] items-start gap-[16px]">
          <div className="flex h-[65px] w-[390px] items-center rounded-[16px] border-[2px] border-[#323a45] bg-[#0a0e12] pl-[22px] text-[26px] tracking-[-0.02em] text-white">HomePage</div>
          <div className="flex h-[63px] w-[64px] items-center justify-center rounded-[14px] border-[3px] border-[#323a45] bg-[#1d2428] text-white">
            <DupIcon className="h-[30px] w-[30px]" />
          </div>
          <div className="flex h-[63px] w-[64px] items-center justify-center rounded-[14px] border-[3px] border-[#323a45] bg-[#1d2428] text-white">
            <Trash2 className="h-[32px] w-[32px]" strokeWidth={2.200} />
          </div>
        </div>
        <div className="mt-[22px] flex h-[80px] items-center rounded-[16px] border-[2px] border-[#323a45] bg-[#0a0e12] pl-[30px] text-[26px] tracking-[-0.018em] text-[#57636c]">Describe your page here...</div>
        <div className="mt-[21px] flex h-[71px] items-center rounded-[16px] bg-[#1d2428] pl-[4px] text-[#8b97a3]">
          <div className="flex h-[64px] w-[102px] items-center justify-center rounded-[14px] bg-[#101316] text-white">
            <RulerPen className="h-[40px] w-[40px]" />
          </div>
          <div className="ml-[4px] flex">
            <span className="flex w-[110px] justify-center"><ActionFlow className="h-[38px] w-[42px]" /></span>
            <span className="flex w-[111px] justify-center"><Database className="h-[39px] w-[36px]" /></span>
            <span className="flex w-[111px] items-center justify-center"><Play className="h-[30px] w-[28px] fill-current" strokeWidth={0} /></span>
            <span className="flex w-[108px] justify-center"><FolderBox className="h-[39px] w-[33px]" /></span>
          </div>
        </div>
        <div className="mt-[25px] flex h-[34px] items-center text-white">
          <span className="text-[25px] font-semibold tracking-[-0.02em]">Nav Bar Item Properties</span>
          <Info className="ml-[7px] h-[24px] w-[24px] text-[#57636c]" strokeWidth={1.800} />
          <ChevronDown className="mr-[1px] ml-auto h-[32px] w-[34px] text-[#95a1ac]" strokeWidth={1.700} />
        </div>
        <div className="mt-[20px] flex h-[48px] items-center justify-between text-[24px] tracking-[-0.02em] text-[#95a1ac]">
          <span>Show on Nav Bar</span>
          <Toggle tone="on" />
        </div>
        <div className="mt-[20px] flex h-[48px] items-center text-[24px] tracking-[-0.02em] text-[#95a1ac]">
          <span>Always Show Nav Bar on Page</span>
          <Info className="ml-[11px] h-[24px] w-[24px] text-[#57636c]" strokeWidth={1.800} />
          <span className="ml-auto">
            <Toggle tone="dim" />
          </span>
        </div>
        <p className="mt-[19px] text-[24px] leading-[30px] tracking-[-0.02em] text-[#95a1ac]">Label</p>
        <div className="mt-[10px] flex h-[63px] items-center rounded-[16px] border-[2px] border-[#323a45] pl-[22px] text-[25px] font-semibold text-white">Home</div>
        <div className="mt-[17px] flex h-[34px] items-center text-[#95a1ac]">
          <span className="text-[25px] font-semibold tracking-[-0.02em]">Nav Bar Icon</span>
          <Info className="ml-[7px] h-[24px] w-[24px] text-[#57636c]" strokeWidth={1.800} />
          <ChevronDown className="mr-[1px] ml-auto h-[32px] w-[34px]" strokeWidth={1.700} />
        </div>
        <div className="mt-[18px] flex h-[63px] items-center justify-center rounded-[18px] bg-[#353c48] pr-[4px] text-[25px] font-medium tracking-[-0.02em] text-white">
          Home Outlined
          <HouseOutline className="ml-[27px] h-[30px] w-[32px]" />
        </div>
        <p className="mt-[17px] text-[24px] leading-[30px] tracking-[-0.02em] text-[#95a1ac]">Icon Size</p>
        <div className="mt-[10px] flex h-[62px] w-[120px] items-center justify-center rounded-[16px] border-[2px] border-[#2b323b] pr-[6px] text-[25px] font-bold text-white">24</div>
        <div className="mt-[19px] flex h-[48px] items-center justify-between text-[24px] tracking-[-0.02em] text-[#95a1ac]">
          <span>Different Active Icon</span>
          <Toggle tone="off" />
        </div>
      </div>
      <span className="absolute top-[1316px] right-[40px] flex h-[96px] w-[96px] items-center justify-center rounded-full bg-[#4838e6] text-white">
        <Magnifier className="h-[58px] w-[58px]" />
      </span>
    </aside>
  );
}

export default function App() {
  return (
    <div className="flex h-[1584px] w-[2876px] flex-col overflow-hidden bg-[#14181b] font-['Inter','Noto_Sans_CJK_KR',sans-serif]">
      <div className="flex h-[28px] shrink-0 items-start border-b-[3px] border-[#cfcfcf] bg-white">
        {topBits.map((bit) => (
          <span key={bit} className={`shrink-0 ${bit}`} />
        ))}
      </div>
      <Header />
      <div className="flex min-h-0 flex-1">
        <Rail />
        <div className="flex w-[560px] shrink-0 flex-col">
          <PagesPanel />
          <div className="flex h-[23px] shrink-0 justify-center bg-[#323a45] pt-[8px]">
            <span className="h-[10px] w-[60px] rounded-full bg-[#95a1ac]" />
          </div>
          <WidgetTree />
        </div>
        <div className="flex w-[20px] shrink-0 justify-center bg-[#2f3640] pt-[698px]">
          <span className="h-[59px] w-[11px] rounded-full bg-[#6b7680]" />
        </div>
        <Canvas />
        <div className="w-[23px] shrink-0 bg-[#323a45]">
          <div className="h-[1374px] rounded-[12px] bg-[#0d0f11]" />
        </div>
        <Properties />
      </div>
    </div>
  );
}
